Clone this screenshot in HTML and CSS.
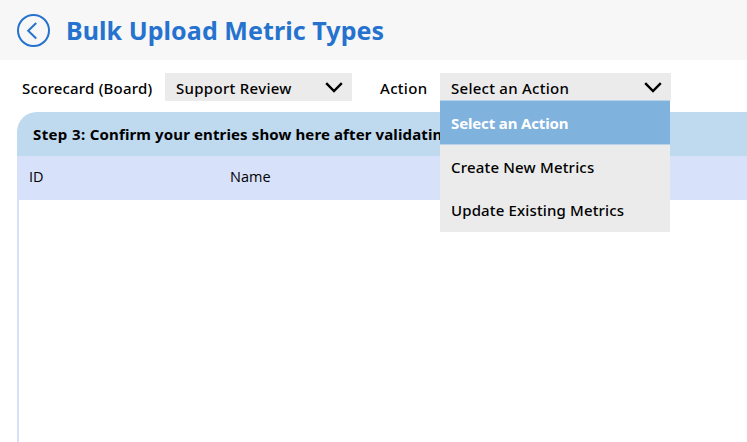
FILE: index.html
```html
<!DOCTYPE html>
<html lang="en">
<head>
<meta charset="utf-8">
<title>Bulk Upload Metric Types</title>
<link rel="stylesheet" href="styles.css">
</head>
<body>
<header class="header">
  <svg class="back" viewBox="0 0 33 33" fill="none" stroke="currentColor"><circle cx="16.5" cy="16.5" r="15.5" stroke-width="2"/><path d="M19.2 9 11.2 16.7l8 7.8" stroke-width="2"/></svg>
  <h1 class="title">Bulk Upload Metric Types</h1>
</header>
<div class="filters">
  <label class="label label-board"><span class="t-board">Scorecard (Board)</span></label>
  <div class="select select-board"><span class="t-support">Support Review</span><svg class="chevron" viewBox="0 0 18 11" fill="none" stroke="currentColor"><path d="M1.2 1.2 9 9l7.8-7.8" stroke-width="2.4"/></svg></div>
  <label class="label label-action"><span class="t-action">Action</span></label>
  <div class="select select-action"><span class="t-select">Select an Action</span><svg class="chevron" viewBox="0 0 18 11" fill="none" stroke="currentColor"><path d="M1.2 1.2 9 9l7.8-7.8" stroke-width="2.4"/></svg>
    <ul class="menu">
      <li class="option selected"><span class="t-selected">Select an Action</span></li>
      <li class="option"><span class="t-create">Create New Metrics</span></li>
      <li class="option"><span class="t-update">Update Existing Metrics</span></li>
    </ul>
  </div>
</div>
<section class="panel">
  <h2 class="step"><span class="t-step">Step 3: </span>Confirm your entries show here after validating</h2>
  <div class="columns"><span class="t-id">ID</span><span class="t-name">Name</span></div>
  <div class="rows"></div>
</section>
</body>
</html>
```
FILE: styles.css
```css
* { box-sizing: border-box; }
body {
  margin: 0;
  height: 442px;
  overflow: hidden;
  display: flex;
  flex-direction: column;
  background: #fff;
  color: #000;
  font: 500 15px/20px "Noto Sans", "Open Sans", sans-serif;
  white-space: nowrap;
}
.header {
  height: 60px;
  flex: none;
  display: flex;
  align-items: center;
  gap: 16px;
  padding-left: 17px;
  background: #f7f7f7;
  color: #2672cf;
}
.back { width: 33px; height: 33px; margin-top: 1px; }
.title { margin: 0; font-size: 25px; line-height: 34px; font-weight: 700; letter-spacing: 0.08px; }
.filters { height: 52px; flex: none; display: flex; padding: 13px 0 0 22px; }
.label { line-height: 30px; }
.label-board { width: 143px; }
.label-action { width: 60px; margin-left: 28px; }
.t-board { letter-spacing: 0.2px; }
.t-support { letter-spacing: 0.3px; }
.t-action { letter-spacing: 0.3px; }
.t-select { letter-spacing: 0.26px; }
.t-selected { letter-spacing: -0.14px; }
.t-create { letter-spacing: 0.18px; }
.t-update { letter-spacing: 0.14px; }
.select {
  position: relative;
  height: 28px;
  display: flex;
  align-items: flex-start;
  justify-content: space-between;
  padding: 0 9px 0 11px;
  background: #ebebeb;
  line-height: 30px;
}
.select-board { width: 187px; }
.select-action { width: 231px; }
.chevron { width: 18px; height: 11px; margin-top: 9px; }
.menu {
  position: absolute;
  left: 0;
  top: 27px;
  z-index: 2;
  width: 230px;
  height: 132px;
  margin: 0;
  padding: 0;
  list-style: none;
  background: #ebebeb;
  border-top: 1px solid #b9d4ea;
}
.option { height: 43px; padding-left: 11px; line-height: 45px; }
.selected { height: 44px; line-height: 44px; background: #80b2de; color: #fff; border-bottom: 1px solid #b9d4ea; font-weight: 700; }
.panel { flex: 1; display: flex; flex-direction: column; margin-left: 17px; border-radius: 20px 0 0 0; overflow: hidden; }
.step { height: 44px; margin: 0; padding-left: 16px; background: #bfd9ef; font-size: 15px; line-height: 45px; font-weight: 700; letter-spacing: 0.12px; }
.t-step { letter-spacing: 0.38px; white-space: pre; }
.columns { height: 44px; display: flex; padding-left: 12px; background: #d7e1fa; font-family: "Open Sans", sans-serif; font-size: 14.5px; line-height: 41px; font-weight: 400; }
.t-id { width: 201px; }
.rows { flex: 1; border-left: 2px solid #d7e1fa; }
```
